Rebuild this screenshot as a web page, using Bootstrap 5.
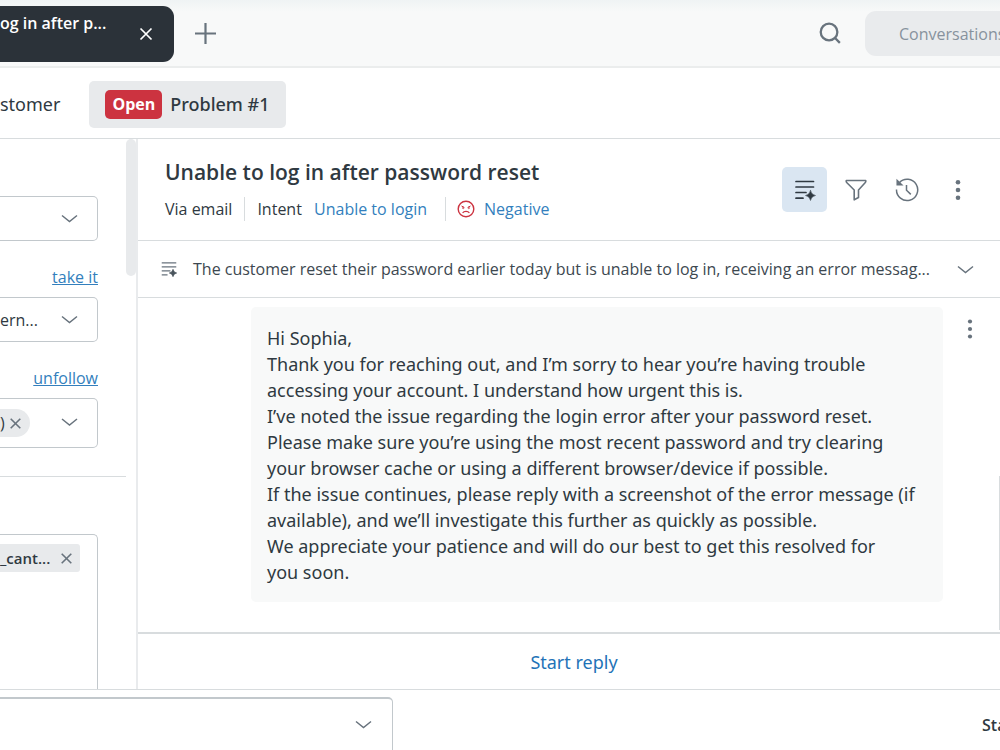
<!DOCTYPE html>
<html lang="en">
<head>
<meta charset="utf-8">
<meta name="viewport" content="width=device-width, initial-scale=1">
<title>Unable to log in after password reset</title>
<link href="https://cdn.jsdelivr.net/npm/bootstrap@5.3.0/dist/css/bootstrap.min.css" rel="stylesheet">
<style>
  :root { --ink: #2f3941; --ink-soft: #3d4850; --muted: #87929d; --line: #d8dcde; --field: #c2c8cc; --link: #337fbd; --chip: #e8eaec; --pale: #f8f9f9; }
  body { font-family: "Open Sans", "Noto Sans", sans-serif; font-size: 16px; line-height: 24px; color: var(--ink); }
  a { color: var(--link); }
  svg { display: block; flex: none; fill: none; stroke: #68737d; }
  .bare { border: 0; background: none; padding: 0; color: inherit; }
  .topbar { height: 68px; background: linear-gradient(#eff3f4, #f8f9f9 12px); border-bottom: 2px solid #ebeded; }
  .ticket-tab { width: 174px; height: 56px; margin-top: 6px; padding-right: 21px; background: #2b3239; color: #fff; border-radius: 0 11px 11px 0; font-size: 16px; font-weight: 600; }
  .ticket-tab span { padding-bottom: 22px; }
  .ticket-tab svg { stroke: #fff; }
  .conv-pill { width: 135px; height: 45px; margin-top: 11px; padding-left: 34px; background: #e9ebed; border-radius: 11px 0 0 11px; color: var(--muted); }
  .crumbs { height: 71px; padding-top: 2px; border-bottom: 1px solid var(--line); font-family: "Noto Sans", sans-serif; font-size: 18px; }
  .problem { height: 47px; margin-left: 29px; padding: 0 16px; gap: 8px; background: var(--chip); border-radius: 5px; font-weight: 500; }
  .status-open { height: 29px; padding: 0 7px; line-height: 29px; background: #cc3340; color: #fff; border-radius: 5px; font-family: "Open Sans", sans-serif; font-size: 16px; font-weight: 700; }
  .side { width: 138px; border-right: 2px solid #e9ebed; }
  .side-fields { padding: 57px 28px 0 0; }
  .side-fields .field-link { margin: 24px 0 8px; font-size: 16px; text-align: right; }
  .side-select, .field-box { border: 1px solid var(--field); border-left: 0; border-radius: 0 5px 5px 0; background-color: #fff; color: var(--ink); }
  .side-select { width: 100%; height: 45px; padding: 0 40px 0 0; font-size: 16px; background-position: right 19px center; background-size: 17px 17px;
    background-image: url("data:image/svg+xml,%3csvg xmlns='http://www.w3.org/2000/svg' viewBox='0 0 17 17'%3e%3cpath d='M1 5.500l7.500 6 7.500-6' fill='none' stroke='%2368737d' stroke-width='1.500'/%3e%3c/svg%3e"); }
  .side-select:focus { border-color: var(--field); box-shadow: none; }
  .follow-box { height: 50px; padding-right: 19px; }
  .person-chip { height: 28px; padding-right: 9px; gap: 5px; background: var(--chip); border-radius: 0 14px 14px 0; }
  .side-rule { height: 1px; margin: 28px -28px 57px 0; background: var(--line); }
  .tag-box { flex: 1 1 0; border-bottom: 0; border-bottom-right-radius: 0; padding: 9px 17px 0 0; }
  .tag-chip { height: 28px; padding-right: 8px; background: var(--chip); border-radius: 0 3px 3px 0; font-weight: 600; font-size: 15px; }
  .thumb { width: 10px; height: 137px; background: var(--chip); border-radius: 5px; }
  .page-part { min-width: 0; }
  .ticket-head { height: 102px; padding: 0 20px 0 27px; border-bottom: 1px solid var(--line); }
  .ticket-head h1 { font-size: 21px; line-height: 28px; font-weight: 600; margin: 0 0 11px; }
  .meta > * + * { border-left: 1px solid var(--line); }
  .meta a { text-decoration: none; }
  .mood { padding-left: 11px; margin-left: 2px; gap: 9px; }
  .mood svg { stroke: #cc3340; }
  .tools { gap: 6px; }
  .tool { width: 45px; height: 45px; border-radius: 5px; }
  .tool.active { background: #dae6f2; }
  .tool.active svg { stroke: var(--ink); }
  .dots { fill: #68737d; stroke: none; }
  .summary { height: 57px; padding: 0 26px 0 23px; gap: 16px; border-bottom: 1px solid var(--line); font-size: 16px; color: var(--ink-soft); }
  .thread { padding: 9px 24px 0 113px; }
  .bubble { padding: 18px 8px 17px 16px; background: var(--pale); border-radius: 5px; font-family: "Noto Sans", sans-serif; font-size: 18px; line-height: 26px; }
  .thread-more { margin: 12px 0 0 21px; }
  .thread-thumb { right: 0; bottom: 2px; width: 1px; height: 154px; background: #d8dcde; }
  .reply { height: 57px; padding-left: 10px; border-top: 2px solid var(--line); font-family: "Noto Sans", sans-serif; font-size: 18px; }
  .reply button { color: #1f73b7; }
  .foot { height: 61px; border-top: 1px solid var(--line); padding-top: 7px; }
  .macro { width: 393px; height: 60px; border-width: 2px 1px 1px 0; background-position: right 20px top 17px; }
  .foot-label { width: 18px; font-weight: 600; }
</style>
</head>
<body class="d-flex flex-column vh-100 overflow-hidden bg-white">

<header class="topbar d-flex align-items-start flex-shrink-0">
  <div class="ticket-tab d-flex justify-content-between align-items-center flex-shrink-0">
    <span class="text-nowrap">og in after p...</span>
    <button class="bare" aria-label="Close tab"><svg width="14" height="14" viewBox="0 0 14 14" stroke-width="1.700"><path d="M1.500 1.500l11 11M12.500 1.500l-11 11"/></svg></button>
  </div>
  <button class="bare ms-3 ps-1 align-self-center" aria-label="Add"><svg width="23" height="23" viewBox="0 0 23 23" stroke-width="2.200"><path d="M11.500 1v21M1 11.500h21"/></svg></button>
  <button class="bare ms-auto me-4 align-self-center" aria-label="Search"><svg width="22" height="22" viewBox="0 0 23 23" stroke-width="2.400"><circle cx="10.500" cy="10.500" r="8.700"/><path d="M16.500 16.500l5.300 5.300"/></svg></button>
  <button class="bare conv-pill text-start text-nowrap overflow-hidden flex-shrink-0">Conversations</button>
</header>

<nav class="crumbs d-flex align-items-center flex-shrink-0" aria-label="Ticket">
  <span>stomer</span>
  <div class="problem d-flex align-items-center"><span class="status-open">Open</span><span>Problem #1</span></div>
</nav>

<main class="d-flex flex-fill overflow-hidden">
  <aside class="side d-flex flex-shrink-0">
    <div class="side-fields flex-fill d-flex flex-column">
      <select class="form-select side-select flex-shrink-0" aria-label="Requester"><option></option></select>
      <div class="field-link"><a href="#">take it</a></div>
      <select class="form-select side-select flex-shrink-0" aria-label="Assignee"><option>ern...</option></select>
      <div class="field-link"><a href="#">unfollow</a></div>
      <div class="field-box follow-box d-flex align-items-center justify-content-between flex-shrink-0">
        <span class="person-chip d-flex align-items-center"><span>)</span><button class="bare" aria-label="Remove follower"><svg width="11" height="11" viewBox="0 0 11 11" stroke-width="1.600"><path d="M.7.7l9.600 9.600M10.300.7L.7 10.300"/></svg></button></span>
        <button class="bare" aria-label="Show followers"><svg width="17" height="17" viewBox="0 0 17 17" stroke-width="1.500"><path d="M1 4l7.500 6L16 4"/></svg></button>
      </div>
      <div class="side-rule flex-shrink-0"></div>
      <div class="field-box tag-box">
        <span class="tag-chip d-flex align-items-center justify-content-between"><span>_cant...</span><button class="bare" aria-label="Remove tag"><svg width="11" height="11" viewBox="0 0 11 11" stroke-width="1.600"><path d="M.7.7l9.600 9.600M10.300.7L.7 10.300"/></svg></button></span>
      </div>
    </div>
    <div class="thumb"></div>
  </aside>

  <section class="page-part d-flex flex-column flex-fill">
    <div class="ticket-head d-flex align-items-center justify-content-between flex-shrink-0">
      <div>
        <h1>Unable to log in after password reset</h1>
        <div class="meta d-flex text-nowrap">
          <span class="pe-2 me-1">Via email</span>
          <span class="ps-2 pe-3"><span class="ms-1 me-2">Intent</span> <a href="#">Unable to login</a></span>
          <span class="mood d-flex align-items-center"><svg width="18" height="18" viewBox="0 0 18 18" stroke-width="1.400"><circle cx="9" cy="9" r="7.800"/><path d="M5.600 13c1.400-2.200 5.400-2.200 6.800 0" stroke-width="1.200"/><path d="M4.500 6l2.800 1.400M13.500 6l-2.800 1.400" stroke-width="1"/><circle cx="6.200" cy="8" r=".7" stroke-width=".8"/><circle cx="11.800" cy="8" r=".7" stroke-width=".8"/></svg><a href="#">Negative</a></span>
        </div>
      </div>
      <div class="tools d-flex">
        <button class="bare tool active d-flex align-items-center justify-content-center" aria-label="Summary"><svg width="22" height="22" viewBox="0 0 22 22" stroke-width="1.700" stroke-linecap="round"><path d="M2 2.500h17.500M2 8h17.500M2 13.500h10M2 19.200h7"/><path d="M16.500 11.500q.8 4.200 5 5-4.200.8-5 5-.8-4.200-5-5 4.200-.8 5-5z" fill="#2f3941" stroke-width=".5"/></svg></button>
        <button class="bare tool d-flex align-items-center justify-content-center" aria-label="Filter"><svg width="22" height="22" viewBox="0 0 22 22" stroke-width="1.600" stroke-linejoin="round"><path d="M1.300 1.500h19.400q.4 1.300-.6 2.300L13.500 11v7.500l-4.300 2.300V11L1.900 3.800q-1-1-.6-2.300z"/></svg></button>
        <button class="bare tool d-flex align-items-center justify-content-center" aria-label="History"><svg width="24" height="24" viewBox="0 0 24 24" stroke-width="1.500"><path d="M4.300 4.700A10.600 10.600 0 1 1 1.500 11.500M11.500 7v5.200l4.300 4.200"/><path d="M2.200 2.500v4.300h4.500z" fill="#68737d"/></svg></button>
        <button class="bare tool d-flex align-items-center justify-content-center" aria-label="More"><svg class="dots" width="6" height="22" viewBox="0 0 6 22"><circle cx="3" cy="3.300" r="2.300"/><circle cx="3" cy="11" r="2.300"/><circle cx="3" cy="18.700" r="2.300"/></svg></button>
      </div>
    </div>

    <div class="summary d-flex align-items-center flex-shrink-0">
      <svg width="16" height="16" viewBox="0 0 22 22" stroke-width="1.800"><path d="M1 2.500h20M1 8h20M1 13.500h12M1 19.200h8"/><path d="M16.500 11.500q.8 4.200 5 5-4.200.8-5 5-.8-4.200-5-5 4.200-.8 5-5z" fill="#49545c" stroke="#49545c" stroke-width="1"/></svg>
      <span class="text-nowrap">The customer reset their password earlier today but is unable to log in, receiving an error messag...</span>
      <button class="bare ms-auto" aria-label="Expand summary"><svg width="17" height="17" viewBox="0 0 17 17" stroke-width="1.500"><path d="M1 5.500l7.500 6 7.500-6"/></svg></button>
    </div>

    <div class="thread d-flex align-items-start flex-fill position-relative">
      <div class="bubble flex-fill">
        <div>Hi Sophia,</div>
        <div>Thank you for reaching out, and I’m sorry to hear you’re having trouble accessing your account. I understand how urgent this is.</div>
        <div>I’ve noted the issue regarding the login error after your password reset.</div>
        <div>Please make sure you’re using the most recent password and try clearing<br>your browser cache or using a different browser/device if possible.</div>
        <div>If the issue continues, please reply with a screenshot of the error message (if available), and we’ll investigate this further as quickly as possible.</div>
        <div>We appreciate your patience and will do our best to get this resolved for<br>you soon.</div>
      </div>
      <button class="bare thread-more" aria-label="Message actions"><svg class="dots" width="12" height="20" viewBox="0 0 12 20"><circle cx="6" cy="2.500" r="2.100"/><circle cx="6" cy="10" r="2.100"/><circle cx="6" cy="17.500" r="2.100"/></svg></button>
      <div class="thread-thumb position-absolute"></div>
    </div>

    <div class="reply d-flex align-items-center justify-content-center flex-shrink-0"><button class="bare">Start reply</button></div>
  </section>
</main>

<footer class="foot d-flex justify-content-between align-items-start flex-shrink-0 overflow-hidden">
  <select class="form-select side-select macro flex-shrink-0" aria-label="Apply macro"><option></option></select>
  <span class="foot-label mt-3">Sta</span>
</footer>

<script src="https://cdn.jsdelivr.net/npm/bootstrap@5.3.0/dist/js/bootstrap.bundle.min.js"></script>
</body>
</html>
